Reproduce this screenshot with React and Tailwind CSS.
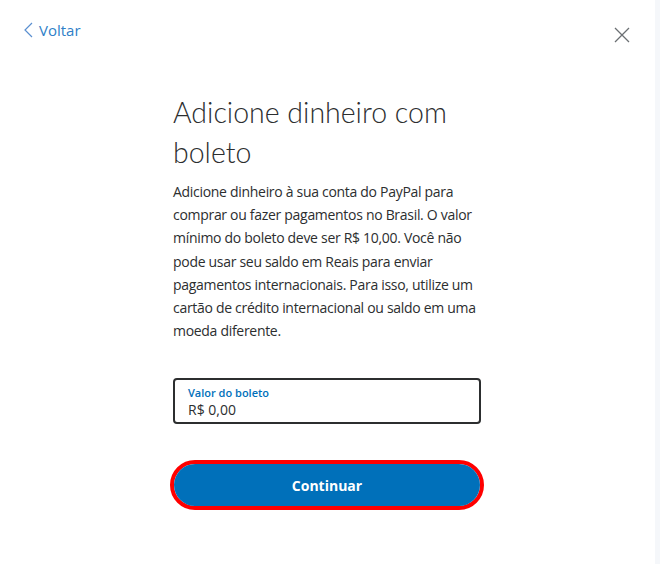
export default function App() {
  return (
    <div className="relative w-[660px] h-[564px] bg-white overflow-hidden font-['Open_Sans',sans-serif] text-[#2c2e2f]">
      <div className="absolute top-0 right-0 w-[5px] h-full bg-[#f5f7fa]" />

      {/* Top bar */}
      <div className="flex justify-between items-start pl-[24px] pr-[30px] pt-[20px]">
        <button className="flex items-center gap-[6px] text-[#2f7fc8] text-[15px]">
          <svg width="9" height="16" viewBox="0 0 9 16" fill="none" stroke="#5a8fd0" strokeWidth="1.2">
            <path d="M8 1 L1 8 L8 15" />
          </svg>
          <span className="leading-[20px]">Voltar</span>
        </button>
        <button className="mt-[7px]">
          <svg width="16" height="16" viewBox="0 0 16 16" fill="none" stroke="#6b6f73" strokeWidth="1.3">
            <path d="M1 1 L15 15 M15 1 L1 15" />
          </svg>
        </button>
      </div>

      {/* Content */}
      <div className="w-[308px] ml-[173px] mt-[49px]">
        <h1 className="font-['Lato',sans-serif] font-light text-[28.5px] leading-[40px] text-[#2c2e2f]">
          Adicione dinheiro com boleto
        </h1>
        <p className="mt-[8px] text-[14px] leading-[23.2px] tracking-[-0.3px]">
          Adicione dinheiro à sua conta do PayPal para comprar ou fazer pagamentos no Brasil. O valor mínimo do boleto deve ser R$ 10,00. Você não pode usar seu saldo em Reais para enviar pagamentos internacionais. Para isso, utilize um cartão de crédito internacional ou saldo em uma moeda diferente.
        </p>

        <div className="mt-[36px] h-[46px] border-[2px] border-[#2c2e2f] rounded-[4px] px-[13px] pt-[6px]">
          <div className="text-[11px] font-semibold text-[#0070ba] leading-[14px]">Valor do boleto</div>
          <div className="text-[14px] leading-[20px]">R$ 0,00</div>
        </div>

        <div className="mt-[36px] -mx-[3px] border-[4px] border-[#ff0000] rounded-full">
          <button className="w-full h-[42px] rounded-full bg-[#0070ba] text-white font-bold text-[14px]">
            Continuar
          </button>
        </div>
      </div>
    </div>
  );
}
